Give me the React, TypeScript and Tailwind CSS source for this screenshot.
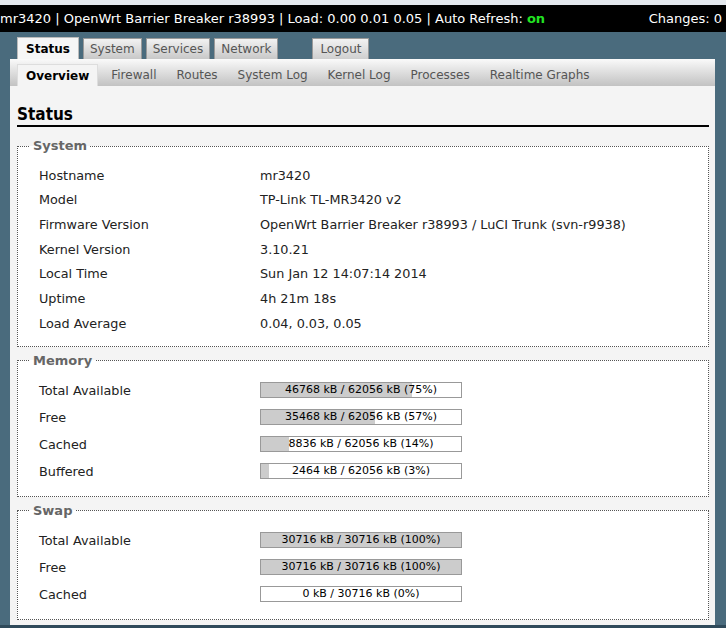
import React from 'react';

const mainTabs = [
  { label: 'Status', active: true },
  { label: 'System' },
  { label: 'Services' },
  { label: 'Network' },
];

const subTabs = ['Overview', 'Firewall', 'Routes', 'System Log', 'Kernel Log', 'Processes', 'Realtime Graphs'];

const systemRows: [string, string][] = [
  ['Hostname', 'mr3420'],
  ['Model', 'TP-Link TL-MR3420 v2'],
  ['Firmware Version', 'OpenWrt Barrier Breaker r38993 / LuCI Trunk (svn-r9938)'],
  ['Kernel Version', '3.10.21'],
  ['Local Time', 'Sun Jan 12 14:07:14 2014'],
  ['Uptime', '4h 21m 18s'],
  ['Load Average', '0.04, 0.03, 0.05'],
];

const memoryRows = [
  { label: 'Total Available', used: 46768, total: 62056 },
  { label: 'Free', used: 35468, total: 62056 },
  { label: 'Cached', used: 8836, total: 62056 },
  { label: 'Buffered', used: 2464, total: 62056 },
];

const swapRows = [
  { label: 'Total Available', used: 30716, total: 30716 },
  { label: 'Free', used: 30716, total: 30716 },
  { label: 'Cached', used: 0, total: 30716 },
];

const Bar: React.FC<{ used: number; total: number }> = ({ used, total }) => {
  const pct = Math.floor((used / total) * 100);
  return (
    <div className="relative w-[202px] h-[16px] border border-[#999] bg-white">
      <div className="absolute left-0 top-0 bottom-0 bg-[#ccc]" style={{ width: `${(used / total) * 100}%` }} />
      <div className="relative text-center text-[11px] leading-[14px] text-black">
        {used} kB / {total} kB ({pct}%)
      </div>
    </div>
  );
};

const Section: React.FC<{ title: string; className?: string; children: React.ReactNode }> = ({ title, className, children }) => (
  <fieldset className={`border border-dotted border-[#555] bg-white px-[21px] ${className ?? ''}`}>
    <legend className="ml-[-9px] px-[3px] text-[13px] leading-[16px] font-bold text-[#666]">{title}</legend>
    {children}
  </fieldset>
);

export default function App() {
  return (
    <div className="w-[726px] h-[628px] overflow-hidden bg-[#4a6b7d] text-[12.8px] text-[#222]" style={{ fontFamily: '"DejaVu Sans", Verdana, sans-serif' }}>
      <div className="h-[5px] bg-[#e4e9ee]" />
      {/* header */}
      <div className="h-[27px] bg-black text-white flex items-center justify-between pr-[4px] text-[13px]">
        <span>
          mr3420 | OpenWrt Barrier Breaker r38993 | Load: 0.00 0.01 0.05 | Auto Refresh:{' '}
          <span className="font-bold text-[#22e322]">on</span>
        </span>
        <span>Changes: 0</span>
      </div>

      {/* main tabs */}
      <div className="flex items-end h-[27px] pl-[17px] pt-[5px] text-[12px]">
        {mainTabs.map((t) =>
          t.active ? (
            <div key={t.label} className="h-[22px] px-[8px] mr-[4px] flex items-center font-bold text-black bg-[#f6f6f6] border border-b-0 border-[#bbb]">
              {t.label}
            </div>
          ) : (
            <div key={t.label} className="h-[21px] px-[6px] mr-[4px] flex items-center text-[#555] bg-gradient-to-b from-[#f2f2f2] to-[#c8c8c8] border border-b-0 border-[#999]">
              {t.label}
            </div>
          )
        )}
        <div className="h-[21px] px-[7px] ml-[30px] flex items-center text-[#555] bg-gradient-to-b from-[#f2f2f2] to-[#cfcfcf] border border-b-0 border-[#999]">
          Logout
        </div>
      </div>

      <div className="ml-[10px] mr-[11px]">
        {/* sub tabs */}
        <div className="h-[27px] flex items-end pl-[7px] bg-gradient-to-b from-[#fafafa] to-[#c2c2c2] text-[12px] text-[#555]">
          {subTabs.map((s, i) =>
            i === 0 ? (
              <div key={s} className="h-[22px] px-[8px] mr-[3px] flex items-center font-bold text-black bg-[#f4f4f4] border border-b-0 border-[#ddd]">
                {s}
              </div>
            ) : (
              <div key={s} className="h-[22px] px-[10px] flex items-center">
                {s}
              </div>
            )
          )}
        </div>

        {/* content */}
        <div className="bg-[#f4f4f4] pl-[7px] pr-[6px] pt-[18px] h-[539px]">
          <h2 className="text-[17px] leading-[20px] font-bold text-black border-b-2 border-black pb-[1px]" style={{ fontFamily: '"DejaVu Sans Condensed", "DejaVu Sans", sans-serif' }}>
            Status
          </h2>

          <Section title="System" className="mt-[11px] pt-[9px] pb-[10px]">
            {systemRows.map(([k, v]) => (
              <div key={k} className="flex items-center h-[24.67px]">
                <div className="w-[221px]">{k}</div>
                <div>{v}</div>
              </div>
            ))}
          </Section>

          <Section title="Memory" className="mt-[6px] pt-[8px] pb-[11px]">
            {memoryRows.map((r) => (
              <div key={r.label} className="flex items-center h-[27px]">
                <div className="w-[221px]">{r.label}</div>
                <Bar used={r.used} total={r.total} />
              </div>
            ))}
          </Section>

          <Section title="Swap" className="mt-[6px] pt-[8px] pb-[11px]">
            {swapRows.map((r) => (
              <div key={r.label} className="flex items-center h-[27px]">
                <div className="w-[221px]">{r.label}</div>
                <Bar used={r.used} total={r.total} />
              </div>
            ))}
          </Section>
        </div>
      </div>
      <div className="h-[3px] bg-[#2f4a5a]" />
    </div>
  );
}
